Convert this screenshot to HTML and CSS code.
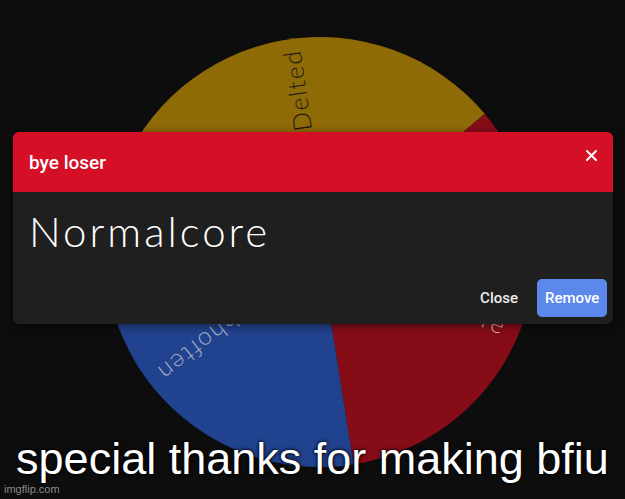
FILE: index.html
```html
<!DOCTYPE html>
<html lang="en">
  <head>
    <meta charset="UTF-8" />
    <meta name="viewport" content="width=device-width, initial-scale=1.0" />
    <title>bye loser</title>
    <link rel="stylesheet" href="styles.css">
  </head>
  <body>
    <div class="stage">
      <!-- the wheel: three slices, labels run from the hub out to the rim -->
      <svg class="wheel" width="625" height="499" viewBox="0 0 625 499">
        <path class="slice red" d="M320 252 L484.7 113.8 A215 215 0 0 1 353.6 464.4 Z" />
        <path class="slice blue" d="M320 252 L353.6 464.4 A215 215 0 0 1 118 178.5 Z" />
        <path class="slice gold" d="M320 252 L118 178.5 A215 215 0 0 1 484.7 113.8 Z" />
        <text class="label label-red" x="520" y="261" transform="rotate(22 320 252)">Normalcore</text>
        <text class="label label-blue" x="522" y="261" transform="rotate(142 320 252)">schhoften</text>
        <text class="label label-gold" x="524" y="261" transform="rotate(-98 320 252)">Delted</text>
      </svg>

      <div class="dialog">
        <div class="dialog-head">
          <span class="dialog-title">bye loser</span>
          <svg class="dialog-x" width="11" height="11" viewBox="0 0 11 11">
            <path d="M1 1 L10 10 M10 1 L1 10" />
          </svg>
        </div>
        <div class="dialog-body">
          <div class="winner">Normalcore</div>
          <div class="dialog-actions">
            <button class="btn btn-text">Close</button>
            <button class="btn btn-primary">Remove</button>
          </div>
        </div>
      </div>

      <div class="caption">special thanks for making bfiu</div>
      <div class="watermark">imgflip.com</div>
    </div>
  </body>
</html>
```

FILE: styles.css
```css
body {
  margin: 0;
  background: #0d0d0d;
  font-family: Roboto, "Liberation Sans", sans-serif;
}
.stage {
  position: relative;
  width: 625px;
  height: 499px;
  overflow: hidden;
  background: #0d0d0d;
}
.wheel {
  position: absolute;
  left: 0;
  top: 0;
}
.slice.red {
  fill: #860c18;
}
.slice.blue {
  fill: #21428e;
}
.slice.gold {
  fill: #8f6b07;
}
.label {
  font-family: Lato, "Open Sans", sans-serif;
  font-weight: 300;
  font-size: 25px;
  letter-spacing: 1.5px;
  text-anchor: end;
}
.label-gold {
  fill: #1c1a12;
}
.label-blue {
  fill: #a3abc2;
}
.label-red {
  fill: #d9b7bb;
}

.dialog {
  position: absolute;
  left: 13px;
  top: 132px;
  width: 600px;
  height: 192px;
  border-radius: 6px;
  overflow: hidden;
  background: #1f1f1f;
  box-shadow: 0 2px 8px rgba(0, 0, 0, 0.5);
  display: flex;
  flex-direction: column;
}
.dialog-head {
  height: 60px;
  background: #d51026;
  display: flex;
  align-items: center;
  justify-content: space-between;
  padding: 0 16px;
}
.dialog-title {
  color: #fff;
  font-size: 19px;
  font-weight: 500;
}
.dialog-x {
  margin-top: -14px;
}
.dialog-x path {
  stroke: #fff;
  stroke-width: 2;
  stroke-linecap: round;
}
.dialog-body {
  flex: 1;
  display: flex;
  flex-direction: column;
  justify-content: space-between;
  padding: 14px 6px 7px 16px;
}
.winner {
  color: #fff;
  font-family: Lato, "Open Sans", sans-serif;
  font-weight: 300;
  font-size: 42px;
  letter-spacing: 3px;
  line-height: 50px;
}
.dialog-actions {
  display: flex;
  justify-content: flex-end;
  gap: 11px;
}
.btn {
  font-family: Roboto, sans-serif;
  font-size: 15px;
  font-weight: 500;
  height: 38px;
  border: none;
  border-radius: 5px;
  padding: 0 8px;
  cursor: pointer;
}
.btn-text {
  background: transparent;
  color: #ececec;
}
.btn-primary {
  background: #5c88eb;
  color: #fff;
  width: 70px;
}

.caption {
  position: absolute;
  left: 0;
  right: 0;
  top: 433px;
  text-align: center;
  color: #fff;
  font-family: "Liberation Sans", Arial, sans-serif;
  font-size: 45px;
  line-height: 52px;
  text-shadow: 0 0 4px #000, 0 0 2px #000;
}
.watermark {
  position: absolute;
  left: 4px;
  top: 483px;
  color: #8a8a8a;
  font-family: "Liberation Sans", Arial, sans-serif;
  font-size: 11px;
}
```
